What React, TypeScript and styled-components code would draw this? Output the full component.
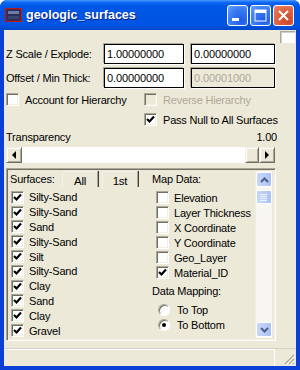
import React from "react";
import styled, { createGlobalStyle } from "styled-components";

const GlobalStyle = createGlobalStyle`
  html, body {
    margin: 0;
    padding: 0;
  }
  body {
    width: 300px;
    height: 370px;
    overflow: hidden;
    font-family: "Liberation Sans", Arial, sans-serif;
    font-size: 11px;
    letter-spacing: -0.2px;
    color: #000;
  }
`;

const surfaces = [
  "Silty-Sand",
  "Silty-Sand",
  "Sand",
  "Silty-Sand",
  "Silt",
  "Silty-Sand",
  "Clay",
  "Sand",
  "Clay",
  "Gravel",
];

const mapData = [
  { name: "Elevation", checked: false },
  { name: "Layer Thickness", checked: false },
  { name: "X Coordinate", checked: false },
  { name: "Y Coordinate", checked: false },
  { name: "Geo_Layer", checked: false },
  { name: "Material_ID", checked: true },
];

const Check = ({ checked, disabled }: { checked?: boolean; disabled?: boolean }) => (
  <CheckBox disabled={disabled}>
    {checked && (
      <svg width="9" height="9" viewBox="0 0 9 9">
        <path d="M1 4 L3.5 6.5 L8 1.5" stroke={disabled ? "#ACA899" : "#000"} strokeWidth="2.2" fill="none" />
      </svg>
    )}
  </CheckBox>
);

const App = () => {
  return (
    <Window>
      <GlobalStyle />
      <TitleBar>
        <svg width="17" height="14" viewBox="0 0 17 14">
          <rect x="0.5" y="0.5" width="16" height="13" fill="#2B2F55" stroke="#C01818" strokeWidth="1.5" />
          <rect x="3" y="3" width="11" height="3" fill="#6C7DAA" />
          <rect x="3" y="8" width="11" height="3" fill="#3A4470" />
        </svg>
        <Title>geologic_surfaces</Title>
        <TitleButtons>
          <CapButton>
            <svg width="21" height="21" viewBox="0 0 21 21">
              <rect x="5" y="13" width="7" height="3" fill="#fff" />
            </svg>
          </CapButton>
          <CapButton>
            <svg width="21" height="21" viewBox="0 0 21 21">
              <rect x="5" y="5" width="11" height="11" fill="none" stroke="#fff" strokeWidth="1" />
              <rect x="5" y="5" width="11" height="3" fill="#fff" />
            </svg>
          </CapButton>
          <CapButton close>
            <svg width="21" height="21" viewBox="0 0 21 21">
              <path d="M6 6 L15 15 M15 6 L6 15" stroke="#fff" strokeWidth="2" />
            </svg>
          </CapButton>
        </TitleButtons>
      </TitleBar>

      <Client>
        <CornerRow>
          <CornerBox />
        </CornerRow>

        <FieldRow>
          <span>Z Scale / Explode:</span>
          <Field readOnly value="1.00000000" />
          <Field readOnly value="0.00000000" />
        </FieldRow>
        <FieldRow gap>
          <span>Offset / Min Thick:</span>
          <Field readOnly value="0.00000000" />
          <Field readOnly disabled value="0.00001000" />
        </FieldRow>

        <OptionRow top={5}>
          <Option>
            <Check />
            <span>Account for Hierarchy</span>
          </Option>
          <Option disabled>
            <Check disabled />
            <span>Reverse Hierarchy</span>
          </Option>
        </OptionRow>
        <OptionRow top={7}>
          <span />
          <Option>
            <Check checked />
            <span>Pass Null to All Surfaces</span>
          </Option>
        </OptionRow>

        <SliderLabel>
          <span>Transparency</span>
          <span>1.00</span>
        </SliderLabel>
        <Slider>
          <ArrowButton>
            <Tri left />
          </ArrowButton>
          <Track />
          <Thumb />
          <ArrowButton>
            <Tri />
          </ArrowButton>
        </Slider>

        <Panel>
          <Column width={142}>
            <Header>
              <HeaderLabel>Surfaces:</HeaderLabel>
              <Tab>All</Tab>
              <Tab>1st</Tab>
            </Header>
            {surfaces.map((s, i) => (
              <ListRow key={i} indent={2}>
                <Check checked />
                <span>{s}</span>
              </ListRow>
            ))}
          </Column>
          <Column>
            <Header>
              <HeaderLabel>Map Data:</HeaderLabel>
            </Header>
            {mapData.map((m) => (
              <ListRow key={m.name} indent={5}>
                <Check checked={m.checked} />
                <span>{m.name}</span>
              </ListRow>
            ))}
            <SubHeader>Data Mapping:</SubHeader>
            <ListRow indent={7}>
              <Radio />
              <span>To Top</span>
            </ListRow>
            <ListRow indent={7}>
              <Radio selected />
              <span>To Bottom</span>
            </ListRow>
          </Column>
          <VScroll>
            <VButton>
              <svg width="9" height="6" viewBox="0 0 9 6">
                <path d="M1 5 L4.5 1.5 L8 5" stroke="#4D6185" strokeWidth="2" fill="none" />
              </svg>
            </VButton>
            <VThumb>
              <svg width="8" height="8" viewBox="0 0 8 8">
                <path d="M0 1.5 H7 M0 3.5 H7 M0 5.5 H7 M0 7.5 H7" stroke="#EEF4FE" strokeWidth="1" />
              </svg>
            </VThumb>
            <VTrack />
            <VButton>
              <svg width="9" height="6" viewBox="0 0 9 6">
                <path d="M1 1 L4.5 4.5 L8 1" stroke="#4D6185" strokeWidth="2" fill="none" />
              </svg>
            </VButton>
          </VScroll>
        </Panel>

        <StatusBar>
          <StatusPane />
          <Grip>
            <svg width="12" height="12" viewBox="0 0 12 12">
              <path d="M11 2 L2 11 M11 6 L6 11 M11 10 L10 11" stroke="#ACA899" strokeWidth="1.2" />
              <path d="M12 3 L3 12 M12 7 L7 12" stroke="#fff" strokeWidth="1" />
            </svg>
          </Grip>
        </StatusBar>
      </Client>
    </Window>
  );
};

export default App;

const Window = styled.div`
  width: 300px;
  height: 370px;
  display: flex;
  flex-direction: column;
  background: #0A3FD8;
  border-radius: 7px 7px 0 0;
  overflow: hidden;
`;

const TitleBar = styled.div`
  height: 30px;
  flex-shrink: 0;
  display: flex;
  align-items: center;
  padding: 0 6px 0 5px;
  background: linear-gradient(
    to bottom,
    #4A9BFF 0%,
    #0D68F2 8%,
    #0058E6 20%,
    #0054E3 55%,
    #0055E5 80%,
    #0047CC 100%
  );
`;

const Title = styled.div`
  margin-left: 4px;
  flex: 1;
  color: #fff;
  font-weight: bold;
  font-size: 12.5px;
  letter-spacing: 0;
  text-shadow: 1px 1px 0 #0A1E80;
`;

const TitleButtons = styled.div`
  display: flex;
  gap: 2px;
`;

const CapButton = styled.div<{ close?: boolean }>`
  width: 21px;
  height: 21px;
  box-sizing: border-box;
  border: 1px solid #fff;
  border-radius: 3px;
  display: flex;
  align-items: center;
  justify-content: center;
  background: ${({ close }) =>
    close
      ? "radial-gradient(circle at 70% 75%, #CC4627 0%, #E16845 60%, #EB8568 100%)"
      : "radial-gradient(circle at 70% 75%, #1E5CE6 0%, #3C7EF5 60%, #6EA1F8 100%)"};

  svg {
    display: block;
    margin: -1px;
  }
`;

const Client = styled.div`
  flex: 1;
  margin: 0 4px 4px;
  background: #ECE9D8;
  display: flex;
  flex-direction: column;
`;

const CornerRow = styled.div`
  height: 14px;
  display: flex;
  justify-content: flex-end;
  align-items: flex-start;
`;

const CornerBox = styled.div`
  width: 15px;
  height: 12px;
  margin: 1px 1px 0 0;
  box-sizing: border-box;
  background: #fff;
  border-top: 1px solid #ACA899;
  border-left: 1px solid #ACA899;
  box-shadow: inset 1px 1px 0 #D4D0C8;
`;

const FieldRow = styled.div<{ gap?: boolean }>`
  display: grid;
  grid-template-columns: 98px 80px 84px;
  align-items: center;
  height: 20px;
  margin: ${({ gap }) => (gap ? "4px" : "0")} 0 0 2px;

  & > :last-child {
    margin-left: 7px;
    width: 84px;
  }
`;

const Field = styled.input`
  box-sizing: border-box;
  height: 20px;
  width: 80px;
  margin: 0;
  padding: 0 0 0 2px;
  border: 1px solid #000;
  outline: none;
  box-shadow: -1px -1px 0 #ACA899, 1px 1px 0 #fff;
  background: ${({ disabled }) => (disabled ? "#ECE9D8" : "#fff")};
  font-family: "Liberation Sans", Arial, sans-serif;
  font-size: 11px;
  letter-spacing: -0.1px;
  color: ${({ disabled }) => (disabled ? "#ACA899" : "#000")};
  -webkit-text-fill-color: ${({ disabled }) => (disabled ? "#ACA899" : "#000")};
  opacity: 1;
`;

const OptionRow = styled.div<{ top: number }>`
  display: grid;
  grid-template-columns: 138px 1fr;
  margin: ${({ top }) => top}px 0 0 2px;
  height: 13px;
`;

const Option = styled.div<{ disabled?: boolean }>`
  display: flex;
  align-items: center;
  gap: 6px;
  color: ${({ disabled }) => (disabled ? "#ACA899" : "#000")};
  white-space: nowrap;
`;

const CheckBox = styled.div<{ disabled?: boolean }>`
  width: 13px;
  height: 13px;
  flex-shrink: 0;
  box-sizing: border-box;
  background: ${({ disabled }) => (disabled ? "#ECE9D8" : "#fff")};
  border: 1px solid;
  border-color: #ACA899 #fff #fff #ACA899;
  box-shadow: inset 1px 1px 0 #716F64, inset -1px -1px 0 #F1EFE2;
  display: flex;
  align-items: center;
  justify-content: center;

  svg {
    display: block;
  }
`;

const SliderLabel = styled.div`
  display: flex;
  justify-content: space-between;
  margin: 4px 19px 0 2px;
  height: 14px;
  line-height: 14px;
`;

const Slider = styled.div`
  display: flex;
  width: 269px;
  height: 16px;
  margin: 3px 0 0 2px;
`;

const ArrowButton = styled.div`
  width: 16px;
  height: 16px;
  box-sizing: border-box;
  background: #ECE9D8;
  border: 1px solid;
  border-color: #F1EFE2 #716F64 #716F64 #F1EFE2;
  box-shadow: inset 1px 1px 0 #fff, inset -1px -1px 0 #ACA899;
  display: flex;
  align-items: center;
  justify-content: center;
`;

const Tri = styled.div<{ left?: boolean }>`
  width: 0;
  height: 0;
  border-top: 4px solid transparent;
  border-bottom: 4px solid transparent;
  ${({ left }) => (left ? "border-right: 4px solid #000;" : "border-left: 4px solid #000;")}
`;

const Track = styled.div`
  flex: 1;
  background: #fff;
`;

const Thumb = styled(ArrowButton)`
  width: 14px;
`;

const Panel = styled.div`
  display: flex;
  width: 270px;
  height: 173px;
  margin: 5px 0 0 2px;
  box-sizing: border-box;
  border: 1px solid;
  border-color: #ACA899 #fff #fff #ACA899;
  box-shadow: inset 1px 1px 0 #716F64, inset -1px -1px 0 #F1EFE2;
  padding: 2px;
`;

const Column = styled.div<{ width?: number }>`
  ${({ width }) => (width ? `width: ${width}px;` : "flex: 1;")}
  display: flex;
  flex-direction: column;
  overflow: hidden;
`;

const Header = styled.div`
  height: 19px;
  display: flex;
  align-items: flex-start;
`;

const HeaderLabel = styled.div`
  width: 52px;
  padding: 2px 0 0 1px;
  white-space: nowrap;
`;

const Tab = styled.div`
  width: 37px;
  height: 16px;
  margin-right: 3px;
  box-sizing: border-box;
  padding-top: 4px;
  text-align: center;
  font-size: 11.5px;
  border-right: 1px solid #404040;
  box-shadow: inset -1px 0 0 #ACA899, inset 1px 1px 0 #F4F2E8;
`;

const ListRow = styled.div<{ indent: number }>`
  height: 15px;
  display: flex;
  align-items: center;
  gap: 5px;
  padding-left: ${({ indent }) => indent}px;
  white-space: nowrap;
`;

const SubHeader = styled.div`
  height: 19px;
  padding: 5px 0 0 1px;
  box-sizing: border-box;
  margin-bottom: 3px;
`;

const Radio = styled.div<{ selected?: boolean }>`
  width: 12px;
  height: 12px;
  flex-shrink: 0;
  margin-right: 2px;
  box-sizing: border-box;
  border-radius: 50%;
  background: #fff;
  border: 1px solid;
  border-color: #ACA899 #fff #fff #ACA899;
  box-shadow: inset 1px 1px 0 #716F64;
  display: flex;
  align-items: center;
  justify-content: center;

  &::after {
    content: "";
    width: 4px;
    height: 4px;
    border-radius: 50%;
    background: ${({ selected }) => (selected ? "#000" : "transparent")};
  }
`;

const VScroll = styled.div`
  width: 16px;
  margin-right: 1px;
  display: flex;
  flex-direction: column;
  background: #F7F6F1;
  border-left: 1px solid #EEEDE5;
`;

const VButton = styled.div`
  height: 15px;
  margin: 1px 0;
  box-sizing: border-box;
  border: 1px solid #fff;
  border-radius: 2px;
  background: linear-gradient(to right, #C8D6FB, #B9CCF8 60%, #A9BFF4);
  display: flex;
  align-items: center;
  justify-content: center;
`;

const VThumb = styled(VButton)`
  height: 14px;
  margin-top: 2px;
`;

const VTrack = styled.div`
  flex: 1;
`;

const StatusBar = styled.div`
  margin-top: auto;
  height: 17px;
  display: flex;
  border-top: 1px solid #D4D0C8;
`;

const StatusPane = styled.div`
  width: 270px;
  border-right: 1px solid #fff;
  box-shadow: inset 0 1px 0 #fff;
`;

const Grip = styled.div`
  flex: 1;
  display: flex;
  align-items: flex-end;
  justify-content: flex-end;
  padding: 0 1px 1px 0;
`;
